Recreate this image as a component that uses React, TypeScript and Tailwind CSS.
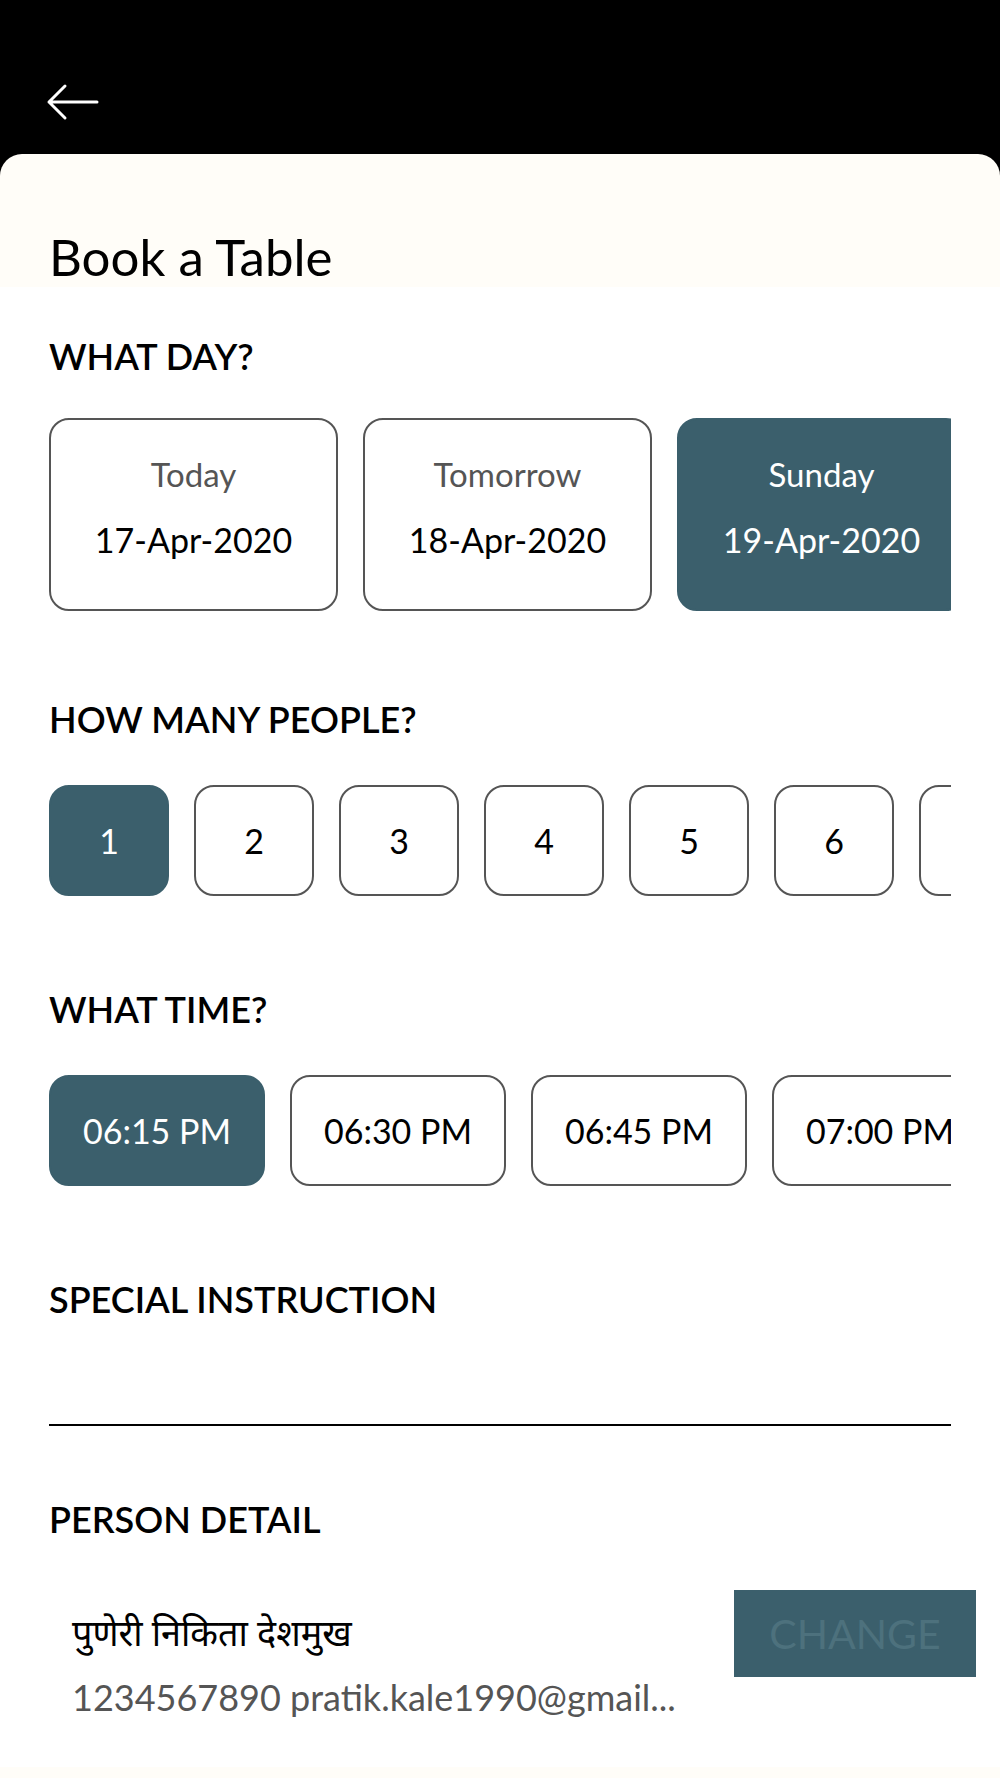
import React from "react";

const days = [
  { label: "Today", date: "17-Apr-2020", selected: false },
  { label: "Tomorrow", date: "18-Apr-2020", selected: false },
  { label: "Sunday", date: "19-Apr-2020", selected: true },
];

const people = [1, 2, 3, 4, 5, 6, 7];
const times = ["06:15 PM", "06:30 PM", "06:45 PM", "07:00 PM"];

export default function App() {
  return (
    <div className="w-[1000px] h-[1778px] overflow-hidden bg-white flex flex-col font-['Lato','Noto_Sans','Noto_Sans_Devanagari',sans-serif] text-black">
      <div className="bg-black">
        <div className="h-[154px] pt-[83px] pl-[46px]">
          <svg width="54" height="38" viewBox="0 0 54 38" fill="none">
            <path d="M3 19H51M19 3L3 19L19 35" stroke="white" strokeWidth="3" strokeLinecap="round" strokeLinejoin="round" />
          </svg>
        </div>
        <div className="bg-[#fffdf8] rounded-t-[22px] h-[133px] px-[49px] pt-[77px]">
          <h1 className="text-[51px] leading-none font-normal">Book a Table</h1>
        </div>
      </div>

      <div className="px-[49px]">
        <h2 className="mt-[51px] text-[36px] leading-none font-semibold">WHAT DAY?</h2>
        <div className="mt-[44px] flex gap-[25px] overflow-hidden">
          {days.map((d) => (
            <div
              key={d.label}
              className={
                d.selected
                  ? "shrink-0 w-[289px] h-[193px] rounded-[20px] border-2 border-[#3b5f6c] bg-[#3b5f6c] text-white flex flex-col items-center pt-[38px]"
                  : "shrink-0 w-[289px] h-[193px] rounded-[20px] border-2 border-[#555555] bg-white flex flex-col items-center pt-[38px]"
              }
            >
              <div className={d.selected ? "text-[33px] leading-none text-white whitespace-nowrap" : "text-[33px] leading-none text-[#555555] whitespace-nowrap"}>{d.label}</div>
              <div className="mt-[32px] text-[34px] leading-none whitespace-nowrap">{d.date}</div>
            </div>
          ))}
        </div>

        <h2 className="mt-[90px] text-[36px] leading-none font-semibold">HOW MANY PEOPLE?</h2>
        <div className="mt-[48px] flex gap-[25px] overflow-hidden">
          {people.map((p) => (
            <div
              key={p}
              className={
                p === 1
                  ? "shrink-0 w-[120px] h-[111px] rounded-[20px] border-2 border-[#3b5f6c] bg-[#3b5f6c] text-white flex items-center justify-center text-[34px]"
                  : "shrink-0 w-[120px] h-[111px] rounded-[20px] border-2 border-[#555555] bg-white flex items-center justify-center text-[34px]"
              }
            >
              {p < 7 ? p : ""}
            </div>
          ))}
        </div>

        <h2 className="mt-[95px] text-[36px] leading-none font-semibold">WHAT TIME?</h2>
        <div className="mt-[48px] flex gap-[25px] overflow-hidden">
          {times.map((t, i) => (
            <div
              key={t}
              className={
                i === 0
                  ? "shrink-0 w-[216px] h-[111px] rounded-[20px] border-2 border-[#3b5f6c] bg-[#3b5f6c] text-white flex items-center justify-center text-[34px] whitespace-nowrap"
                  : "shrink-0 w-[216px] h-[111px] rounded-[20px] border-2 border-[#555555] bg-white flex items-center justify-center text-[34px] whitespace-nowrap"
              }
            >
              {t}
            </div>
          ))}
        </div>

        <h2 className="mt-[95px] text-[36px] leading-none font-semibold">SPECIAL INSTRUCTION</h2>
        <div className="h-[109px] border-b-2 border-black"></div>

        <h2 className="mt-[75px] text-[36px] leading-none font-semibold">PERSON DETAIL</h2>
        <div className="mt-[53px] -mr-[25px] flex justify-between items-start">
          <div className="pl-[23px] pt-[24px] flex flex-col">
            <div className="text-[36px] leading-none">पुणेरी निकिता देशमुख</div>
            <div className="mt-[29px] text-[36px] leading-none text-[#555555] whitespace-nowrap">1234567890 pratik.kale1990@gmail...</div>
          </div>
          <button className="shrink-0 w-[242px] h-[87px] bg-[#3b5f6c] text-[#4d717d] text-[41px] leading-none flex items-center justify-center">
            CHANGE
          </button>
        </div>
      </div>

      <div className="mt-auto h-[11px] bg-[#fffdf8]"></div>
    </div>
  );
}
